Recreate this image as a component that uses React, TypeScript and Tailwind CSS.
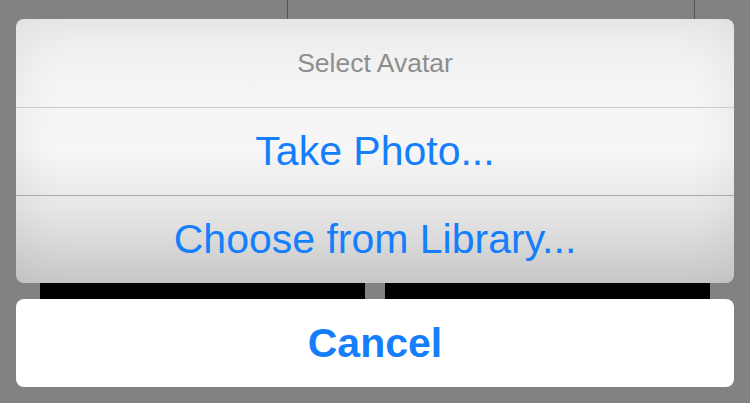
import React from 'react';

const font = { fontFamily: '"Liberation Sans", Arial, sans-serif' };

function SheetRow({ label, first }: { label: string; first?: boolean }) {
  return (
    <button
      className={`flex h-[88px] w-full items-center justify-center text-[41px] leading-none text-[#147efb] ${
        first ? 'border-t border-[#cbcbcb]' : 'border-t border-[#a9a9a9]'
      }`}
    >
      {label}
    </button>
  );
}

export default function App() {
  return (
    <div className="h-[403px] w-[750px] overflow-hidden bg-[#828282]" style={font}>
      {/* Underlying table edges */}
      <div className="relative h-[19px]">
        <div className="absolute left-[287px] top-0 h-full w-px bg-[#555555]" />
        <div className="absolute left-[694px] top-0 h-full w-px bg-[#555555]" />
      </div>

      {/* Action sheet */}
      <div className="mx-4 overflow-hidden rounded-lg bg-[linear-gradient(180deg,#eeeeee_0%,#f5f5f5_30%,#f6f6f6_50%,#e6e6e6_72%,#d6d6d6_88%,#cdcdcd_100%)] shadow-[inset_0_0_50px_rgba(0,0,0,0.07)]">
        <div className="flex h-[88px] items-center justify-center text-[26.5px] leading-none text-[#8e8e8e]">
          Select Avatar
        </div>
        <SheetRow label="Take Photo..." first />
        <SheetRow label="Choose from Library..." />
      </div>

      {/* Black toolbar buttons peeking through */}
      <div className="flex h-4 gap-5 px-10">
        <div className="flex-1 bg-black" />
        <div className="flex-1 bg-black" />
      </div>

      {/* Cancel */}
      <div className="mx-4 rounded-lg bg-white">
        <button className="flex h-[88px] w-full items-center justify-center text-[41px] font-bold leading-none text-[#147efb]">
          Cancel
        </button>
      </div>
    </div>
  );
}
